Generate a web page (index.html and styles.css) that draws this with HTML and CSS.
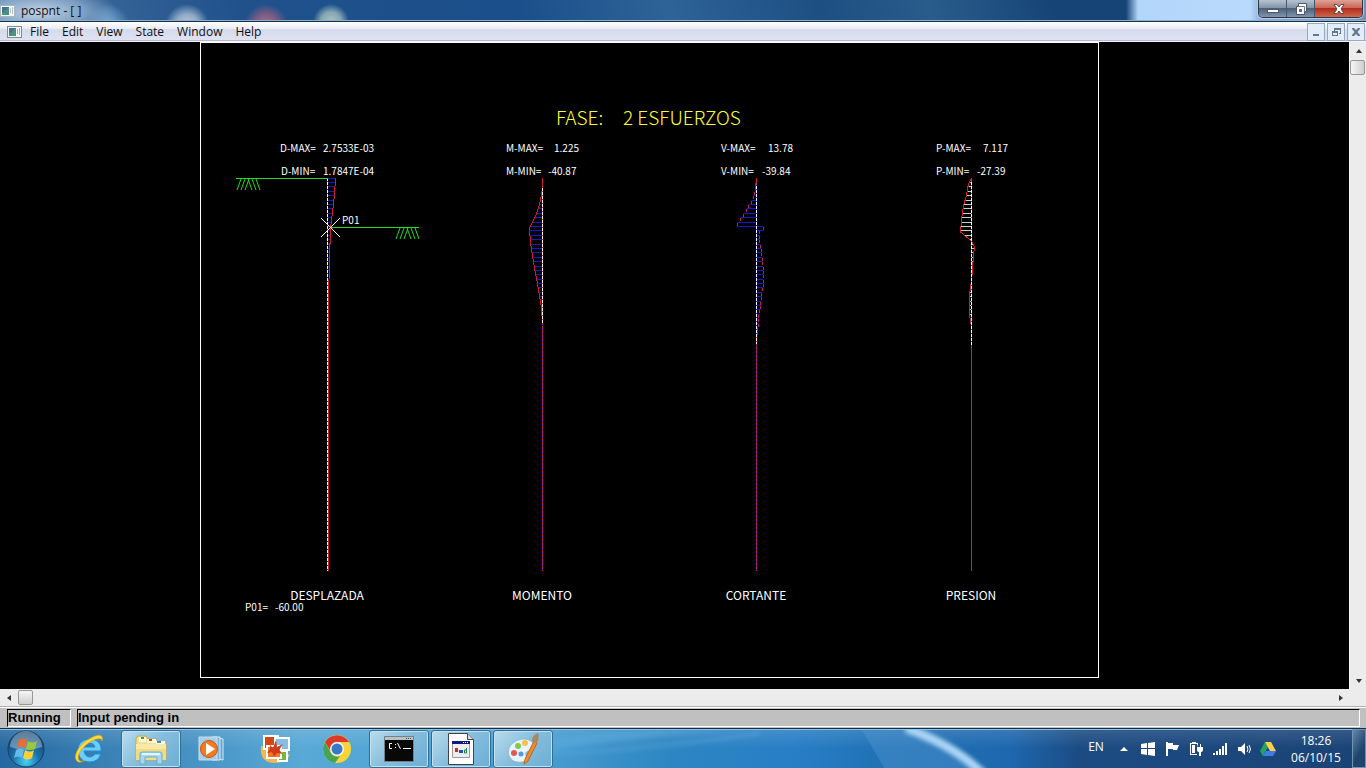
FILE: index.html
```html
<!DOCTYPE html>
<html lang="en">
  <head>
    <meta charset="utf-8">
    <title>pospnt - [ ]</title>
    <link rel="stylesheet" href="styles.css">
  </head>
  <body>
    <header class="titlebar">
      <svg class="app-icon" viewBox="0 0 16 14"><rect x=".5" y="1.5" width="14" height="11" fill="#f4f7f8" stroke="#a9b7bd"/><rect x="2" y="3" width="7" height="8" fill="#4b927e"/><path d="M2 3h7L2 9z" fill="#477197"/><path d="M10 4h1v5h-1M12 3h1v7h-1" fill="#b9c5c9"/></svg>
      <h1 class="title">pospnt - [ ]</h1>
      <div class="window-controls">
        <button class="win-btn" aria-label="Minimize"><svg viewBox="0 0 14 12"><rect x="1.5" y="6.5" width="11" height="3" fill="#fff" stroke="#4c5666"/></svg></button>
        <button class="win-btn" aria-label="Restore"><svg viewBox="0 0 14 12"><path d="M4.500 .5h8v8h-2v3h-8v-8h2z" fill="#fff" stroke="#4c5666"/><path d="M5.500 6.500h2v2h-2z" fill="#8393a7" stroke="#4c5666"/><path d="M5 3.500h5.500V8" fill="none" stroke="#65748a"/></svg></button>
        <button class="win-btn win-close" aria-label="Close"><svg viewBox="0 0 14 12"><path d="M2 1.500h3l2 2.500 2-2.500h3L9 6l3 4.500H9L7 8l-2 2.500H2L5 6z" fill="#fff" stroke="#5d4a50"/></svg></button>
      </div>
    </header>

    <nav class="menubar">
      <svg class="app-icon" viewBox="0 0 16 14"><rect x=".5" y="1.500" width="14" height="11" fill="#f4f7f8" stroke="#7f8c93"/><rect x="2" y="3" width="7" height="8" fill="#4b927e"/><path d="M2 3h7L2 9z" fill="#477197"/><path d="M10 4h1v5h-1M12 3h1v7h-1" fill="#a0aeb4"/></svg>
      <button class="menu">File</button>
      <button class="menu">Edit</button>
      <button class="menu">View</button>
      <button class="menu">State</button>
      <button class="menu">Window</button>
      <button class="menu">Help</button>
      <div class="mdi-controls">
        <button class="mdi-btn" aria-label="Minimize document"><svg viewBox="0 0 12 12"><path d="M3 8h6v2H3z"/></svg></button>
        <button class="mdi-btn" aria-label="Restore document"><svg viewBox="0 0 12 12"><path d="M4 2h7v6H9V7h1V4H5v1H4zM2 5h6v5H2zm1 2v2h4V7z" fill-rule="evenodd"/></svg></button>
        <button class="mdi-btn" aria-label="Close document"><svg viewBox="0 0 12 12"><path d="M2 2h2l2 2 2-2h2v1L7.500 6 10 9v1H8L6 8l-2 2H2V9l2.500-3L2 3z"/></svg></button>
      </div>
    </nav>

    <main class="client">
      <svg class="plot" id="plot" viewBox="0 42 1349 647" preserveAspectRatio="xMinYMin meet">
        <rect class="frame" x="200.5" y="42.5" width="898" height="635"/>
        <text class="plot-title" x="556" y="125">FASE:</text>
        <text class="plot-title" x="623" y="125">2 ESFUERZOS</text>

        <g class="value">
          <text x="280" y="152">D-MAX=</text><text x="323" y="152">2.7533E-03</text>
          <text x="281" y="175">D-MIN=</text><text x="323" y="175">1.7847E-04</text>
          <text x="506" y="152">M-MAX=</text><text x="554" y="152">1.225</text>
          <text x="506" y="175">M-MIN=</text><text x="548" y="175">-40.87</text>
          <text x="721" y="152">V-MAX=</text><text x="768" y="152">13.78</text>
          <text x="721" y="175">V-MIN=</text><text x="762" y="175">-39.84</text>
          <text x="936" y="152">P-MAX=</text><text x="983" y="152">7.117</text>
          <text x="936" y="175">P-MIN=</text><text x="977" y="175">-27.39</text>
          <text x="342" y="224">P01</text>
          <text x="245" y="611">P01=</text><text x="275" y="611">-60.00</text>
        </g>

        <g class="label">
          <text x="327" y="600">DESPLAZADA</text>
          <text x="542" y="600">MOMENTO</text>
          <text x="756" y="600">CORTANTE</text>
          <text x="971" y="600">PRESION</text>
        </g>

        <g id="curves"></g>

        <g class="ground">
          <path d="M236 178.500h92M241 179l-4 11M245 179l-4 11M249 179l-4 11M248 179l4 11M252 179l4 11M256 179l4 11"/>
          <path d="M330 227.500h89M400 228l-4 11M404 228l-4 11M408 228l-4 11M407 228l4 11M411 228l4 11M415 228l4 11"/>
        </g>
        <path class="marker" d="M321 218l19 19M340 218l-19 19"/>
      </svg>
      <div class="vscroll">
        <button class="arrow" aria-label="Scroll up"><svg viewBox="0 0 8 8"><path d="M1 6l3-4 3 4z"/></svg></button>
        <div class="thumb"></div>
        <button class="arrow arrow-end" aria-label="Scroll down"><svg viewBox="0 0 8 8"><path d="M1 2l3 4 3-4z"/></svg></button>
      </div>
    </main>
    <div class="hscroll">
      <button class="arrow" aria-label="Scroll left"><svg viewBox="0 0 8 8"><path d="M6 1L2 4l4 3z"/></svg></button>
      <div class="thumb"></div>
      <button class="arrow arrow-end" aria-label="Scroll right"><svg viewBox="0 0 8 8"><path d="M2 1l4 3-4 3z"/></svg></button>
    </div>

    <div class="statusbar">
      <div class="status-cell">Running</div>
      <div class="status-cell status-wide">Input pending in</div>
    </div>

    <footer class="taskbar">
      <svg class="aurora" viewBox="0 0 1366 40" preserveAspectRatio="none">
        <defs><filter id="soft" x="-20%" y="-50%" width="140%" height="200%"><feGaussianBlur stdDeviation="2"/></filter></defs>
        <path d="M500 32Q620 5 750 0H650Q550 5 500 20z" fill="#64b5e4" opacity=".35" filter="url(#soft)"/>
        <path d="M550 24Q660 20 760 3" fill="none" stroke="#78b9e8" stroke-width="4" opacity=".25" filter="url(#soft)"/>
        <path d="M862 0h50q50 18 68 40h-95z" fill="#5599d2" opacity=".4"/>
        <path d="M906 -2Q955 16 984 46" fill="none" stroke="#a9d4f6" stroke-width="9" filter="url(#soft)"/>
      </svg>
      <button class="start" aria-label="Start">
        <svg viewBox="0 0 38 38">
          <defs><radialGradient id="orb" cx=".5" cy=".85" r=".8"><stop offset="0" stop-color="#45d4f5"/><stop offset=".45" stop-color="#1d72ac"/><stop offset="1" stop-color="#153e69"/></radialGradient></defs>
          <circle cx="19" cy="19" r="18" fill="url(#orb)" stroke="#193e60"/>
          <path d="M3 17a16 16 0 0 1 32 0q-16 6-32 0z" fill="#cde4ef" opacity=".4"/>
          <path d="M12 10q4-3 8 0l-2 8q-4-3-8 0z" fill="#ef6c2c"/>
          <path d="M21 11q4 3 9 0l-2 8q-5 2-9 0z" fill="#9bc73b"/>
          <path d="M9 20q4-3 8 0l-2 8q-4-3-8 0z" fill="#65b9ec"/>
          <path d="M18 20q5 3 9 0l-2 8q-5 3-9 0z" fill="#ffd03a"/>
        </svg>
      </button>
      <button class="task" aria-label="Internet Explorer">
        <svg viewBox="0 0 32 32"><path d="M28 18H11q1 6 6 6 3 0 5-3h6q-3 8-11 8C9 29 5 24 5 17S10 6 17 6s12 5 11 12zM11 14h11q-1-4-5.500-4T11 14z" fill="#6bcdfa" stroke="#238bd0" fill-rule="evenodd"/><path d="M4 28C-1 23 7 10 18 5c7-4 13-4 11 3 0-3-4-3-10 0C9 13 3 23 6 27q2 3 6 0-5 4-8 1z" fill="#ffdb39" stroke="#d8a31a" stroke-width=".7"/></svg>
      </button>
      <button class="task open" aria-label="Windows Explorer">
        <svg viewBox="0 0 32 32"><path d="M1 9V5l2-2h8l2 3h8l2 3h8v18H1z" fill="#f4df91" stroke="#c8a74c"/><path d="M4 4h7v5H4zM12 6h9v4h-9zM21 8h9v3h-9z" fill="#fffbe0"/><path d="M6 4h3v2H6z" fill="#27a34b"/><path d="M14 6h3v2h-3z" fill="#cc443a"/><path d="M22 8h4v2h-4z" fill="#398ac8"/><path d="M1 11h30v16H1z" fill="#f8e9a8"/><path d="M1 16h30v11H1z" fill="#f2db85"/><path d="M5 31V21q0-2 2-2h18q2 0 2 2v10h-5v-7H10v7z" fill="#a5d9ef" stroke="#66acd0"/><path d="M7 21h18" stroke="#e3f7ff" stroke-width="2"/></svg>
      </button>
      <button class="task" aria-label="Media Player">
        <svg viewBox="0 0 32 32"><path d="M20 5l6 1v21l-6-1z" fill="#62a3cf" stroke="#d1edfa"/><path d="M15 4h8v23h-8z" fill="#7cb4dc" stroke="#d8eefb"/><path d="M2 4h18v23H2z" fill="#a6cee8" stroke="#c5dff0"/><circle cx="12" cy="16" r="8.500" fill="#f17b20" stroke="#cd560c"/><path d="M9 10l9 6-9 6z" fill="#fff"/></svg>
      </button>
      <button class="task" aria-label="Photo Viewer">
        <svg viewBox="0 0 32 32"><path d="M2 13q-2 17 14 17 11 0 15-8l-4-2q-4 7-11 6Q6 25 7 13z" fill="#f4b64f"/><path d="M5 3h14v13H5z" fill="#d54613" stroke="#fff" stroke-width="2"/><path d="M16 5h14v12H16z" fill="#87bfe4" stroke="#fff" stroke-width="2"/><path d="M19 18h9v10h-9z" fill="#6eba45" stroke="#fff" stroke-width="2"/><path d="M8 13h14v12H8z" fill="#ef762c" stroke="#fff" stroke-width="2"/><path d="M11 12l3 3 3-8 1 7 6-3-4 6 4 4-6-1-3 4-2-5-5 1 3-4z" fill="#d2381a"/></svg>
      </button>
      <button class="task" aria-label="Chrome">
        <svg viewBox="0 0 32 32"><circle cx="16" cy="16" r="14" fill="#f8d437"/><path d="M4 9a14 14 0 0 1 24 0H16a7 7 0 0 0-6 10z" fill="#da392d"/><path d="M4 9l6 11a7 7 0 0 0 9 3l-5 7A14 14 0 0 1 4 9z" fill="#47a454"/><circle cx="16" cy="16" r="7" fill="#f3f5f6"/><circle cx="16" cy="16" r="5.500" fill="#3879c6"/></svg>
      </button>
      <button class="task open" aria-label="Command Prompt">
        <svg viewBox="0 0 32 32"><path d="M1.500 3.500h29v25h-29z" fill="#080808" stroke="#768088"/><path d="M2 4h28v3H2z" fill="#b5c2c8"/><path d="M23 5.500h1m1 0h1m1 0h1" stroke="#455"/><path d="M9 10.500H6.500v5H9M12.500 11v1m0 2v1m2-5l3 6M20 15.500h8" fill="none" stroke="#fff"/></svg>
      </button>
      <button class="task open" aria-label="pospnt">
        <svg viewBox="0 0 32 32"><path d="M3.500 .5h19l6 6v25h-25z" fill="#fff" stroke="#444"/><path d="M22.500 .5v6h6" fill="#d7dddf" stroke="#444"/><path d="M7.500 8.500h17v16h-17z" fill="#ededed" stroke="#999"/><path d="M7 8h18v3H7z" fill="#14177d"/><path d="M18 9.500h1m1 0h1m1 0h1" stroke="#fff"/><path d="M10 15h3v4h-3z" fill="#c23"/><path d="M14 17h4v3h-4z" fill="#224cbb"/><path d="M21.500 15v5m-2-3h2v3h-2z" fill="none" stroke="#188343"/></svg>
      </button>
      <button class="task open" aria-label="Paint">
        <svg viewBox="0 0 32 32"><path d="M2 15C5 8 16 3 24 8c5 4 4 9-1 10-5 0-5 3-3 6 2 4-5 6-10 5-7-1-10-8-8-14z" fill="#e7f4fa" stroke="#8ebad2"/><circle cx="7" cy="20" r="3" fill="#e65754"/><circle cx="11" cy="13" r="3" fill="#7ecb49"/><circle cx="18" cy="10" r="3" fill="#f5c34c"/><circle cx="14" cy="21" r="2.500" fill="#509cdd"/><path d="M27 8l3 2-9 18q-3 3-4 3 0-3 2-7z" fill="#ec8c2d" stroke="#bc641c"/><path d="M25 8q0-6 6-8 2 7-2 10z" fill="#ad865e"/></svg>
      </button>

      <div class="tray">
        <button class="language">EN</button>
        <button class="tray-btn" aria-label="Show hidden icons"><svg viewBox="0 0 16 16"><path d="M4 10l4-4 4 4z"/></svg></button>
        <button class="tray-btn" aria-label="Get Windows"><svg viewBox="0 0 16 16"><path d="M1 3l6-1v5H1zm7-1l7-1v6H8zM1 8h6v6l-6-1zm7 0h7v7l-7-1z"/></svg></button>
        <button class="tray-btn" aria-label="Action Center"><svg viewBox="0 0 16 16"><path d="M2 1h2v14H2zM4 2h5v2h6l-2 5H9V8H4z"/></svg></button>
        <button class="tray-btn" aria-label="Power"><svg viewBox="0 0 16 16"><path d="M4 1h4v1h2v1H3v10h6v1H2V2h2z"/><path d="M4 4h3v8H4zM9 3h1v3h2V3h1v3h2v3q0 2-2 2v4h-2v-4q-2 0-2-2V6h1z"/></svg></button>
        <button class="tray-btn" aria-label="Network"><svg viewBox="0 0 16 16"><path d="M1 12h2v2H1zm3-2h2v4H4zm3-2h2v6H7zm3-3h2v9h-2zm3-3h2v12h-2z"/></svg></button>
        <button class="tray-btn" aria-label="Volume"><svg viewBox="0 0 16 16"><path d="M2 6h3l4-4v12l-4-4H2z"/><path d="M11 5q2 3 0 6m2-7q3 4 0 8" fill="none" stroke="#fff"/></svg></button>
        <button class="tray-btn" aria-label="Google Drive"><svg viewBox="0 0 16 16"><path d="M5 1L0 10l3 5 5-9z" fill="#23a464"/><path d="M5 1h6l5 9h-6z" fill="#ffd04b"/><path d="M6 10h10l-3 5H3z" fill="#3e7de9"/></svg></button>
        <button class="clock"><time>18:26</time><span>06/10/15</span></button>
        <button class="show-desktop" aria-label="Show desktop"></button>
      </div>
    </footer>
    <script src="script.js"></script>
  </body>
</html>
```
FILE: styles.css
```css
* {
  box-sizing: border-box;
}

body {
  margin: 0;
  height: 100vh;
  display: flex;
  flex-direction: column;
  overflow: hidden;
  font-family: "Open Sans", "Noto Sans", sans-serif;
  font-size: 12px;
  color: #111;
  background: #000;
}

button {
  margin: 0;
  padding: 0;
  border: none;
  background: none;
  font: inherit;
  color: inherit;
}

svg {
  display: block;
}

.app-icon {
  width: 16px;
  height: 14px;
}

/* title bar */
.titlebar {
  flex: none;
  height: 22px;
  display: flex;
  align-items: center;
  gap: 5px;
  border-bottom: 1px solid #18304e;
  box-shadow: inset 0 -1px #8caed0;
  background:
    radial-gradient(ellipse 80px 26px at 38px 12px, #c2d3e4 0, rgba(150, 180, 210, .7) 60%, transparent 100%),
    radial-gradient(circle at 108px 26px, #7fb5df 0, transparent 22px),
    radial-gradient(circle at 187px 26px, #cbd3dc 0, #8da9c6 12px, transparent 22px),
    radial-gradient(circle at 266px 26px, #a67792 0, #795c83 12px, transparent 22px),
    radial-gradient(circle at 331px 22px, #a9c6c4 0, #85a7b1 10px, transparent 18px),
    linear-gradient(90deg, transparent 1126px, #b2d5fa 1138px, #b9dafc 1250px, #8aabd0 1262px, #718eb0 100%),
    linear-gradient(75deg, #4672a0 0, #20518b 18%, #1b4f8b 38%, #2e6397 49%, #1d4f82 60%, #295c8b 68%, #174477 77%, #174477 100%);
}

.title {
  margin: 0;
  font-size: 12px;
  font-weight: normal;
}

.window-controls {
  align-self: flex-start;
  margin-left: auto;
  margin-right: 3px;
  display: flex;
  height: 18px;
  border: 1px solid #293747;
  border-top: none;
  border-radius: 0 0 5px 5px;
  overflow: hidden;
  box-shadow: 0 0 1px 1px #bacce0;
}

.win-btn {
  width: 28px;
  display: flex;
  align-items: center;
  justify-content: center;
  border-right: 1px solid #47586c;
  background: linear-gradient(#b5c2d0, #8495a9 45%, #4d6179 50%, #8195ae);
}

.win-btn svg {
  width: 14px;
  height: 12px;
}

.win-close {
  width: 47px;
  border-right: none;
  background: linear-gradient(#dfa397, #cb6755 45%, #b12e1b 50%, #cf654d);
}

/* menu bar */
.menubar {
  flex: none;
  height: 20px;
  display: flex;
  align-items: center;
  gap: 1px;
  padding-left: 7px;
  border-bottom: 1px solid #f4f4f8;
  box-shadow: inset 0 -1px #b8bac8;
  background: linear-gradient(#fff, #e9ecf5 35%, #d5daec 40%, #dfe3f4);
}

.menu {
  padding: 0 6px;
}

.mdi-controls {
  margin-left: auto;
  padding-right: 1px;
  display: flex;
  gap: 2px;
}

.mdi-btn {
  width: 18px;
  height: 18px;
  display: flex;
  align-items: center;
  justify-content: center;
  border: 1px solid #93abc3;
  background: #e2edf8;
  fill: #627990;
}

.mdi-btn svg {
  width: 12px;
  height: 12px;
}

/* drawing area */
.client {
  flex: 1;
  min-height: 0;
  display: flex;
  background: #000;
}

.plot {
  flex: 1;
  min-width: 0;
  height: 100%;
  font-family: "Noto Sans CJK SC", "Liberation Sans", sans-serif;
  fill: #fff;
}

.frame {
  fill: none;
  stroke: #fff;
}

.plot-title {
  font-size: 19px;
  font-weight: 300;
  fill: #ff3;
}

.value {
  font-size: 10px;
}

.label {
  font-size: 12px;
  text-anchor: middle;
}

.ground,
.marker,
.curve,
.rib,
.axis {
  fill: none;
}

.curve {
  stroke: #d02020;
  shape-rendering: crispEdges;
}

.ground {
  stroke: #2d2;
}

.marker {
  stroke: #fff;
}

.rib {
  stroke: #1818c8;
}

.rib-white {
  stroke: #ccc;
}

.axis {
  stroke: #fff;
  stroke-dasharray: 3 1;
}

.axis-tail {
  stroke: #c82848;
}

/* scroll bars */
.vscroll,
.hscroll {
  flex: none;
  display: flex;
  background: #ececec;
}

.vscroll {
  width: 17px;
  flex-direction: column;
  border-left: 1px solid #f8f8f8;
}

.hscroll {
  height: 18px;
  padding-right: 17px;
  border-bottom: 1px solid #b0b0b0;
}

.arrow {
  width: 17px;
  height: 17px;
  display: flex;
  align-items: center;
  justify-content: center;
  fill: #333;
}

.arrow svg {
  width: 8px;
  height: 8px;
}

.vscroll .arrow-end {
  margin-top: auto;
}

.hscroll .arrow-end {
  margin-left: auto;
}

.thumb {
  width: 15px;
  height: 15px;
  margin: 1px 0;
  border: 1px solid #979797;
  border-radius: 2px;
  background: linear-gradient(90deg, #f6f6f6, #e2e2e2 50%, #cfcfcf);
}

.hscroll .thumb {
  margin: 1px;
  background: linear-gradient(#f6f6f6, #e2e2e2 50%, #cfcfcf);
}

/* status bar */
.statusbar {
  flex: none;
  height: 21px;
  display: flex;
  gap: 6px;
  padding: 1px 6px 1px 7px;
  border-top: 1px solid #fff;
  background: #c0c0c0;
  font: bold 13px/16px "Liberation Sans", Arial, sans-serif;
  color: #000;
}

.status-cell {
  width: 64px;
  border: 1px solid #fff;
  border-top-color: #000;
  border-left-color: #000;
  white-space: nowrap;
}

.status-wide {
  flex: 1;
}

/* taskbar */
.taskbar {
  flex: none;
  position: relative;
  height: 40px;
  display: flex;
  align-items: center;
  gap: 2px;
  padding-left: 7px;
  border-top: 1px solid #102e4d;
  box-shadow: inset 0 1px #8fc1e1;
  background:
    linear-gradient(rgba(255, 255, 255, .12), transparent 50%),
    linear-gradient(90deg, #2568a0 0, #387fb3 7%, #58a9d6 22%, #4b9fd1 39%, #2d86c2 49%, #287ec6 58%, #2071b4 65%, #1e67ae 74%, #1c4b83 79%, #1a4375 100%);
}

.aurora {
  position: absolute;
  inset: 1px 0 0;
  width: 100%;
  height: 100%;
}

.start,
.task,
.tray {
  position: relative;
}

.start {
  width: 50px;
}

.start svg {
  width: 38px;
  height: 38px;
}

.task {
  width: 60px;
  height: 38px;
  display: flex;
  align-items: center;
  justify-content: center;
  border: 1px solid transparent;
  border-radius: 3px;
}

.task svg {
  width: 32px;
  height: 32px;
}

.open {
  border-color: #306e98;
  box-shadow: inset 0 0 0 1px #c3e1f0;
  background: linear-gradient(135deg, #b9dced, #85bddc 50%, #6caed5);
}

.tray {
  align-self: stretch;
  margin-left: auto;
  display: flex;
  align-items: center;
  color: #fff;
}

.language {
  width: 32px;
  padding-bottom: 5px;
}

.tray-btn {
  width: 24px;
  display: flex;
  justify-content: center;
  fill: #fff;
}

.tray-btn svg {
  width: 16px;
  height: 16px;
}

.clock {
  width: 72px;
  display: flex;
  flex-direction: column;
  align-items: center;
  line-height: 17px;
}

.show-desktop {
  align-self: stretch;
  width: 14px;
  border: 1px solid #7393b3;
  background: linear-gradient(120deg, #6286ab, #1f446e 60%);
}
```
FILE: script.js
```js
const NS = 'http://www.w3.org/2000/svg';
const group = document.querySelector('#curves');

const TOP = 178;
const BOTTOM = 571;
const STEP = 4.4;

// axis: x of the wall, white: the part of the axis drawn in white
const plots = [
  {
    axis: 327, white: [178, 571], ribs: 'rib',
    points: [[335, 178], [334, 195], [332, 212], [330, 228], [329, 260], [328, 300], [328, 571]]
  },
  {
    axis: 542, white: [188, 324], ribs: 'rib',
    points: [[542, 178], [542, 188], [540, 200], [538, 208], [535, 216], [529, 228], [530, 243],
      [532, 256], [534, 268], [537, 284], [539, 296], [541, 308], [542, 324]]
  },
  {
    axis: 756, white: [186, 344], ribs: 'rib', stepped: true,
    points: [[756, 178], [755, 187], [753, 198], [750, 204], [745, 212], [741, 218], [735, 227],
      [763, 227.1], [763, 231], [759, 233], [759, 240], [761, 252], [763, 268], [763, 282],
      [761, 298], [758, 320], [756, 344]]
  },
  {
    axis: 971, white: [182, 346], ribs: 'rib rib-white', tail: 'curve',
    points: [[971, 178], [968, 184], [966, 195], [963, 206], [961, 220], [960, 232], [966, 237],
      [971, 241], [974, 247], [973, 255], [972, 270], [971, 280], [969, 295], [969, 315],
      [971, 326], [971, 346]]
  }
];

function addPath(d, className) {
  const path = document.createElementNS(NS, 'path');
  path.setAttribute('d', d);
  path.setAttribute('class', className);
  group.appendChild(path);
}

function valueAt(points, y) {
  for (let i = 1; i < points.length; i++) {
    const [x0, y0] = points[i - 1];
    const [x1, y1] = points[i];
    if (y <= y1) {
      return x0 + (x1 - x0) * (y - y0) / (y1 - y0);
    }
  }
  return points[points.length - 1][0];
}

plots.forEach((plot) => {
  const axis = plot.axis + 0.5;
  const end = plot.points[plot.points.length - 1][1];
  let ribs = '';
  let steps = '';

  for (let y = TOP; y < end; y += STEP) {
    const row = Math.floor(y) + 0.5;
    const x = Math.round(valueAt(plot.points, y + (plot.stepped ? STEP / 2 : 0))) + 0.5;
    ribs += `M${axis} ${row}H${x}`;
    steps += `M${x} ${row}v3`;
    if (plot.stepped) {
      ribs += `M${axis} ${Math.floor(y + STEP) + 0.5}H${x}`;
    }
  }

  addPath(ribs, plot.ribs);
  addPath(`M${axis} ${TOP}V${BOTTOM}`, plot.tail || 'rib');
  addPath(`M${axis} ${TOP}V${BOTTOM}`, 'axis axis-tail');
  if (plot.stepped) {
    addPath(steps, 'curve');
  } else {
    addPath('M' + plot.points.map(([x, y]) => `${x + 0.5} ${y}`).join('L'), 'curve');
  }
  addPath(`M${axis} ${plot.white[0]}V${plot.white[1]}`, 'axis');
});
```
